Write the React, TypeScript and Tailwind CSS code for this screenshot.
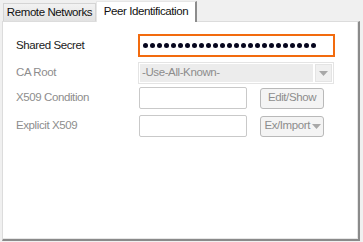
const FONT = "font-['Liberation_Sans',Arial,sans-serif]";

function Dots({ count }: { count: number }) {
  return (
    <div className="flex items-center gap-[2px]">
      {Array.from({ length: count }).map((_, i) => (
        <span key={i} className="block w-[5px] h-[5px] rounded-full bg-[#06061e]" />
      ))}
    </div>
  );
}

function Caret() {
  return (
    <svg width="9" height="5" viewBox="0 0 9 5">
      <path d="M0 0h9L4.5 5z" fill="#a8a8a8" />
    </svg>
  );
}

function Label({ children, disabled }: { children: React.ReactNode; disabled?: boolean }) {
  return (
    <div className={`w-[135px] shrink-0 pl-[13px] ${disabled ? 'text-[#8d8d8d]' : 'text-[#1a1a1a]'}`}>
      {children}
    </div>
  );
}

export default function App() {
  return (
    <div className={`w-[363px] h-[242px] bg-[#f0f0f0] ${FONT} text-[11.5px] tracking-[-0.4px] overflow-hidden`}>
      {/* tabs */}
      <div className="flex items-end h-[21px] pl-[3px]">
        <div className="h-[18px] w-[93px] flex items-center justify-center border border-b-0 border-[#d4d4d4] bg-gradient-to-b from-[#f2f2f2] to-[#e2e2e2] text-[#111]">
          Remote Networks
        </div>
        <div className="relative z-10 h-[21px] w-[101px] flex items-center justify-center border-l border-t border-[#e6e6e6] border-r-2 border-r-[#8c8c8c] bg-white text-[#111] -mb-px">
          Peer Identification
        </div>
      </div>

      {/* panel */}
      <div className="ml-[2px] w-[358px] h-[220px] bg-white border-l border-t border-[#dcdcdc] border-r-2 border-b-2 border-r-[#8a8a8a] border-b-[#8a8a8a]">
        <div className="h-full border-r border-b border-[#e6e6e6] flex flex-col">
          {/* Shared Secret */}
          <div className="flex items-center mt-[12px]">
            <Label>Shared Secret</Label>
            <div className="w-[197px] h-[23px] border-2 border-[#f26b0e] flex items-center pl-[3px]">
              <Dots count={25} />
            </div>
          </div>

          {/* CA Root */}
          <div className="flex items-center mt-[5px]">
            <Label disabled>CA Root</Label>
            <div className="w-[196px] h-[22px] border border-[#e4e4e4] flex items-stretch p-[1px] gap-[2px]">
              <div className="flex-1 bg-[#ececec] text-[#8d8d8d] flex items-center pl-[2px]">-Use-All-Known-</div>
              <div className="w-[17px] bg-[#f0f0f0] border border-[#e4e4e4] flex items-center justify-center">
                <Caret />
              </div>
            </div>
          </div>

          {/* X509 Condition */}
          <div className="flex items-center mt-[3px]">
            <Label disabled>X509 Condition</Label>
            <div className="ml-[1px] w-[108px] h-[22px] border border-[#c9c9c9] rounded-[2px]" />
            <button className="ml-[13px] w-[64px] h-[21px] border border-[#b9b9b9] rounded-[3px] bg-[#f4f4f4] text-[#8d8d8d]">
              Edit/Show
            </button>
          </div>

          {/* Explicit X509 */}
          <div className="flex items-center mt-[6px]">
            <Label disabled>Explicit X509</Label>
            <div className="ml-[1px] w-[108px] h-[22px] border border-[#c9c9c9] rounded-[2px]" />
            <button className="ml-[13px] w-[64px] h-[21px] border border-[#b9b9b9] rounded-[3px] bg-[#f4f4f4] text-[#8d8d8d] flex items-center justify-end pr-[2px] gap-[2px]">
              Ex/Import
              <Caret />
            </button>
          </div>
        </div>
      </div>
    </div>
  );
}
